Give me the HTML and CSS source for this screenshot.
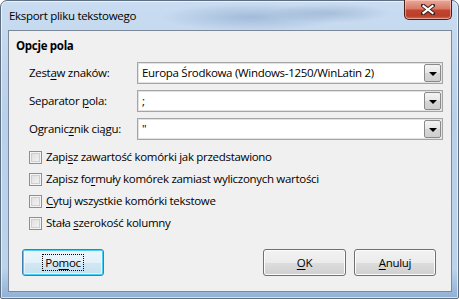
FILE: index.html
```html
<!DOCTYPE html>
<html lang="pl">
<head>
  <meta charset="UTF-8"/>
  <title>Eksport pliku tekstowego</title>
  <link rel="stylesheet" href="styles.css">
</head>
<body>
  <div class="window">
    <div class="titlebar">
      <span class="title">Eksport pliku tekstowego</span>
      <div class="close">
        <svg width="14" height="11" viewBox="0 0 14 11">
          <path d="M2 1.5 L12 9.5 M12 1.5 L2 9.5" stroke="#3a1c16" stroke-width="4" stroke-linecap="square"/>
          <path d="M2.5 2 L11.5 9 M11.5 2 L2.5 9" stroke="#fff" stroke-width="2.2" stroke-linecap="square"/>
        </svg>
      </div>
    </div>

    <div class="client">
      <div class="heading">Opcje pola</div>

      <div class="fields">
        <label>Zest<u>a</u>w znaków:</label>
        <div class="combo"><span>Europa Środkowa (Windows-1250/WinLatin 2)</span><i class="drop"></i></div>

        <label>Separator <u>p</u>ola:</label>
        <div class="combo"><span>;</span><i class="drop"></i></div>

        <label>Ogranic<u>z</u>nik ciągu:</label>
        <div class="combo"><span>"</span><i class="drop"></i></div>
      </div>

      <div class="checks">
        <div class="check"><i class="box"></i><span>Zapi<u>s</u>z zawartość komórki jak przedstawiono</span></div>
        <div class="check"><i class="box"></i><span>Zapisz fo<u>r</u>muły komórek zamiast wyliczonych wartości</span></div>
        <div class="check"><i class="box"></i><span><u>C</u>ytuj wszystkie komórki tekstowe</span></div>
        <div class="check"><i class="box"></i><span>Stała <u>s</u>zerokość kolumny</span></div>
      </div>

      <div class="buttons">
        <button class="btn default"><span class="focus">Po<u>m</u>oc</span></button>
        <div class="spacer"></div>
        <button class="btn"><span><u>O</u>K</span></button>
        <button class="btn"><span><u>A</u>nuluj</span></button>
      </div>
    </div>
  </div>
</body>
</html>
```

FILE: styles.css
```css
* { box-sizing:border-box; margin:0; padding:0; }
body {
  width:459px; height:299px; overflow:hidden;
  background:#fff;
  font-family:"Open Sans","Noto Sans",sans-serif;
  font-size:11.5px; letter-spacing:-0.3px; color:#000;
}
u { text-decoration:underline; text-underline-offset:2px; }

.window {
  width:459px; height:299px;
  display:flex; flex-direction:column;
  border:1px solid #5f6f82;
  border-radius:7px 7px 2px 2px;
  background:
    radial-gradient(ellipse 90px 14px at 250px 16px, rgba(120,150,190,.45), transparent),
    radial-gradient(ellipse 60px 10px at 330px 12px, rgba(110,140,180,.35), transparent),
    linear-gradient(#c9dcf1, #b8d0ea 40%, #bcd3ec 90%, #8fb0d6);
  box-shadow: inset 0 0 0 1px rgba(255,255,255,.6);
}

.titlebar {
  height:28px;
  display:flex; align-items:flex-start;
}
.title {
  padding:8px 0 0 8px;
  line-height:14px;
  color:#000;
}
.close {
  margin-left:auto; margin-right:6px; margin-top:-1px;
  width:48px; height:20px;
  display:flex; align-items:center; justify-content:center;
  border:1px solid #4a1f18;
  border-top:none;
  border-radius:0 0 5px 5px;
  background:linear-gradient(#e9a99a, #d97a68 45%, #c2432e 55%, #b8402c 85%, #d0705c);
  box-shadow: inset 0 0 0 1px rgba(255,210,200,.55);
}

.client {
  flex:1;
  margin:1px 6px 6px 7px;
  border:1px solid #7c8898;
  background:#f0f0f0;
  display:flex; flex-direction:column;
  padding:7px 15px 15px 7px;
}
.heading {
  font-weight:bold; line-height:16px;
}

.fields {
  margin:8px 0 0 13px;
  display:grid;
  grid-template-columns:108px 306px;
  row-gap:6px;
  align-items:center;
}
.fields label { line-height:16px; }
.combo {
  height:22px;
  display:flex; align-items:center;
  border:1px solid #a5a5a5;
  background:#fff;
  box-shadow: inset 0 0 0 1px #e2e2e2;
  padding:1px;
}
.combo span { flex:1; padding-left:3px; line-height:16px; }
.drop {
  width:17px; height:18px;
  border:1px solid #8a8a8a;
  border-radius:2px;
  background:linear-gradient(#f4f4f4, #e6e6e6 50%, #d6d6d6 51%, #cfcfcf);
  position:relative;
}
.drop::after {
  content:""; position:absolute; left:4px; top:7px;
  border-left:4px solid transparent; border-right:4px solid transparent;
  border-top:4px solid #000;
}

.checks {
  margin:6px 0 0 13px;
  display:flex; flex-direction:column;
}
.check {
  height:22px;
  display:flex; align-items:center;
  line-height:16px;
}
.box {
  width:13px; height:13px; margin-right:4px;
  border:1px solid #8f8f8f;
  background:linear-gradient(135deg, #dcdcdc, #f6f6f6);
  box-shadow: inset 0 0 0 1px #f4f4f4, inset 0 0 0 2px #cfcfcf;
}

.buttons {
  margin-top:auto; margin-left:6px;
  display:flex; gap:8px;
}
.spacer { flex:1; }
.btn {
  width:83px; height:27px;
  font:inherit; letter-spacing:inherit; color:#000;
  border:1px solid #707070;
  border-radius:3px;
  background:linear-gradient(#f2f2f2, #ebebeb 50%, #dddddd 51%, #cfcfcf);
  box-shadow: inset 0 0 0 1px #fcfcfc;
  display:flex; align-items:center; justify-content:center;
}
.btn + .btn { width:82px; }
.btn.default {
  width:82px;
  border-color:#3c7fb1;
  box-shadow: inset 0 0 0 1px #48d0f7, inset 0 0 0 2px rgba(255,255,255,.5);
  background:linear-gradient(#ecf6fb, #e4f1f8 50%, #d2e8f4 51%, #c6e0ef);
}
.focus {
  border:1px dotted #000;
  padding:0 2px;
  line-height:15px;
}
```
